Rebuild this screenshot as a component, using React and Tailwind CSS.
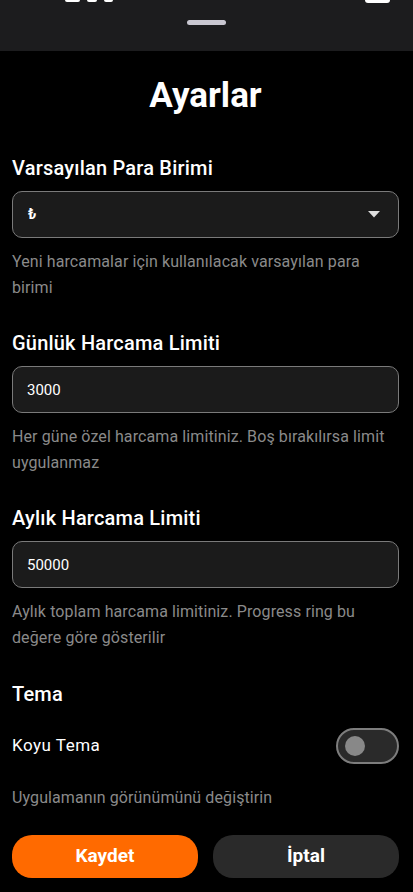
import { useState } from 'react'

const fields = [
  {
    label: 'Günlük Harcama Limiti',
    value: '3000',
    help: 'Her güne özel harcama limitiniz. Boş bırakılırsa limit uygulanmaz'
  },
  {
    label: 'Aylık Harcama Limiti',
    value: '50000',
    help: 'Aylık toplam harcama limitiniz. Progress ring bu değere göre gösterilir'
  }
]

const Label = ({ children }) => (
  <div className="text-[20px] font-medium leading-6 tracking-[0.2px] text-white">{children}</div>
)

const Help = ({ children }) => (
  <p className="mt-[11px] text-[16px] leading-[26px] tracking-[0.1px] text-[#8a8a8a]">{children}</p>
)

const App = () => {
  const [dark, setDark] = useState(false)
  const [values, setValues] = useState(fields.map((f) => f.value))

  return (
    <div className="min-h-[892px] bg-black font-['Roboto',sans-serif] text-white">
      <div className="relative h-[51px] bg-[#1c1c1e]">
        <div className="absolute left-[65px] top-0 flex gap-[7px]">
          <span className="h-[2px] w-[15px] rounded-b bg-white" />
          <span className="h-[2px] w-[10px] rounded-b bg-white" />
          <span className="h-[2px] w-[9px] rounded-b bg-white" />
        </div>
        <span className="absolute left-[365px] top-0 h-[3px] w-[25px] rounded-b-md bg-white" />
        <div className="flex justify-center pt-[20px]">
          <div className="h-[5px] w-[39px] rounded-full bg-[#c9c7d1]" />
        </div>
      </div>

      <div className="pl-3 pr-[14px]">
        <h1 className="pt-[25px] text-center text-[35px] font-bold leading-10">Ayarlar</h1>

        <div className="mt-10">
          <Label>Varsayılan Para Birimi</Label>
          <div className="mt-[11px] flex h-[47px] items-center justify-between rounded-[10px] border border-[#7a7a7a] bg-[#1b1b1b] pl-[15px] pr-[18px]">
            <span className="text-[14px] font-bold">₺</span>
            <svg width="12" height="7" viewBox="0 0 12 7">
              <path d="M0 0h12L6 6.5z" fill="#dedede" />
            </svg>
          </div>
          <Help>Yeni harcamalar için kullanılacak varsayılan para birimi</Help>
        </div>

        {fields.map((field, i) => (
          <div key={field.label} className="mt-[30px]">
            <Label>{field.label}</Label>
            <input
              type="text"
              value={values[i]}
              onChange={(e) => setValues(values.map((v, j) => (j === i ? e.target.value : v)))}
              className="mt-[11px] block h-[47px] w-full rounded-[10px] border border-[#7a7a7a] bg-[#1b1b1b] px-[14px] text-[15px] text-white outline-none"
            />
            <Help>{field.help}</Help>
          </div>
        ))}

        <div className="mt-[31px]">
          <Label>Tema</Label>
          <div className="mt-[22px] flex items-center justify-between">
            <span className="text-[17px] tracking-[0.5px] text-white">Koyu Tema</span>
            <button
              onClick={() => setDark(!dark)}
              className="flex h-[36px] w-[63px] items-center rounded-full border-2 border-[#7d7d7d] bg-[#2a2a2a] px-[7px]"
            >
              <span className={`h-[20px] w-[20px] rounded-full bg-[#888] ${dark ? 'ml-auto' : ''}`} />
            </button>
          </div>
          <p className="mt-[21px] text-[16px] leading-[26px] tracking-[0.1px] text-[#8a8a8a]">Uygulamanın görünümünü değiştirin</p>
        </div>

        <div className="mt-[24px] flex gap-[15px]">
          <button className="h-[43px] flex-1 rounded-[20px] bg-[#ff6a00] text-[19px] font-bold text-white">Kaydet</button>
          <button className="h-[43px] flex-1 rounded-[20px] bg-[#2a2a2a] text-[19px] font-bold text-white">İptal</button>
        </div>
      </div>
    </div>
  )
}

export default App
